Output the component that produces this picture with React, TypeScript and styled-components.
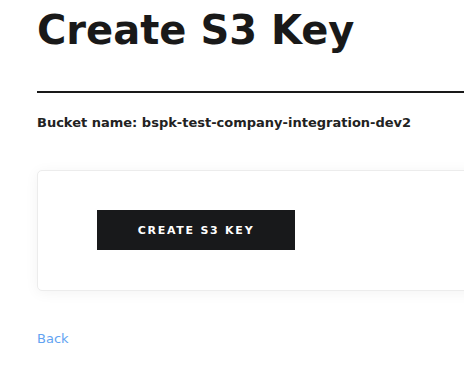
import styled, { createGlobalStyle } from "styled-components";

const GlobalStyle = createGlobalStyle`
  html, body {
    margin: 0;
    padding: 0;
    background: #fff;
    overflow: hidden;
  }
  body {
    font-family: "DejaVu Sans", "Liberation Sans", sans-serif;
    color: #191919;
  }
`;

const Page = styled.div`
  width: 620px;
  padding: 6px 0 0 37px;
  box-sizing: border-box;
`;

const Title = styled.h1`
  margin: 0;
  font-size: 40px;
  line-height: 48px;
  font-weight: 700;
  color: #191919;
`;

const Divider = styled.hr`
  margin: 37px 0 0;
  border: none;
  height: 2px;
  background: #191919;
`;

const BucketName = styled.p`
  margin: 22px 0 0;
  font-size: 13px;
  line-height: 15px;
  font-weight: 700;
  color: #222;
`;

const Card = styled.div`
  margin-top: 40px;
  padding: 40px 60px;
  border: 1px solid #ececec;
  border-radius: 5px;
  background: #fff;
  box-shadow: 0 2px 14px rgba(0, 0, 0, 0.05);
  box-sizing: border-box;
  height: 121px;
`;

const Button = styled.button`
  display: flex;
  align-items: center;
  justify-content: center;
  width: 198px;
  height: 40px;
  margin: -1px 0 0 -1px;
  padding: 0;
  border: none;
  border-radius: 0;
  background: #18191b;
  color: #fff;
  font-family: "DejaVu Sans", sans-serif;
  font-size: 11px;
  font-weight: 700;
  letter-spacing: 1.75px;
  text-transform: uppercase;
  cursor: pointer;
`;

const BackLink = styled.a`
  display: inline-block;
  margin-top: 40px;
  font-size: 13px;
  line-height: 15px;
  color: #62a3f2;
  text-decoration: none;
`;

export default function App() {
  return (
    <Page>
      <GlobalStyle />
      <Title>Create S3 Key</Title>
      <Divider />
      <BucketName>Bucket name: bspk-test-company-integration-dev2</BucketName>
      <Card>
        <Button>Create S3 Key</Button>
      </Card>
      <BackLink href="#">Back</BackLink>
    </Page>
  );
}
